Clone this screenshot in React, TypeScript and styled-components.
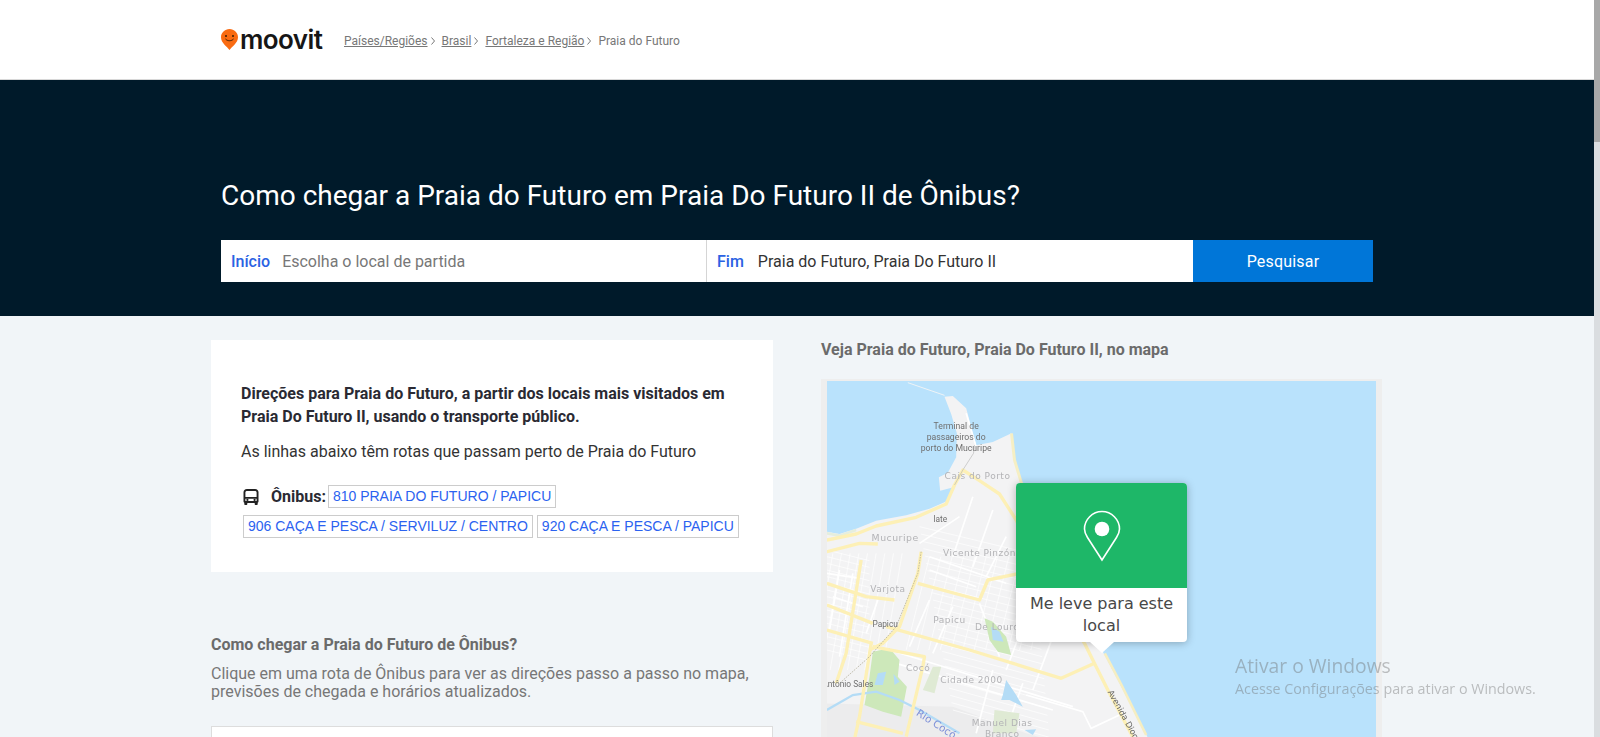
import React from 'react';
import styled, { createGlobalStyle } from 'styled-components';

const GlobalStyle = createGlobalStyle`
    html, body {
        margin: 0;
        height: 737px;
        overflow: hidden;
        background: #f1f5f8;
        font-family: Roboto, "Liberation Sans", sans-serif;
    }
    * {
        box-sizing: border-box;
    }
`;

const Page = styled.div`
    width: 1594px;
    height: 737px;
    overflow: hidden;
`;

const Header = styled.header`
    height: 80px;
    background: #fff;
    border-bottom: 1px solid #d8d8d8;
    padding-left: 221px;
    display: flex;
    align-items: center;
`;

const Logo = styled.a`
    display: flex;
    align-items: center;
    width: 123px;
`;

const LogoText = styled.span`
    font-family: Inter, sans-serif;
    font-size: 26px;
    font-weight: 600;
    letter-spacing: -0.6px;
    color: #161616;
    margin-left: 2px;
    line-height: 28px;
`;

const Crumbs = styled.nav`
    display: flex;
    align-items: center;
    font-size: 12px;
    color: #777;
    margin-top: 2px;
`;

const CrumbLink = styled.a`
    color: #777;
    text-decoration: underline;
`;

const Chevron = styled.svg`
    width: 4px;
    height: 8px;
    margin: 1px 7px 0 3px;
`;

const Hero = styled.section`
    height: 236px;
    background: #001a2a;
    padding: 100px 221px 0 221px;
`;

const Title = styled.h1`
    margin: 0;
    height: 60px;
    font-size: 28px;
    line-height: 32px;
    font-weight: 400;
    color: #fff;
`;

const SearchBar = styled.form`
    display: flex;
    height: 42px;
    background: #fff;
`;

const Field = styled.div<{ $width: number; $divided?: boolean }>`
    width: ${props => props.$width}px;
    display: flex;
    align-items: center;
    font-size: 16px;
    padding-left: 10px;
    border-left: ${props => (props.$divided ? '1px solid #d5d5d5' : 'none')};
`;

const FieldLabel = styled.span<{ $gap: number }>`
    color: #2b62e3;
    font-weight: 500;
    margin-right: ${props => props.$gap}px;
`;

const FieldValue = styled.span<{ $placeholder?: boolean }>`
    color: ${props => (props.$placeholder ? '#777' : '#333')};
`;

const SearchButton = styled.button`
    width: 180px;
    border: 0;
    background: #0076d8;
    color: #fff;
    font: 400 16px Roboto, sans-serif;
    letter-spacing: 0.2px;
`;

const Content = styled.main`
    display: flex;
    padding: 24px 0 0 211px;
`;

const LeftColumn = styled.div`
    width: 561.5px;
    margin-right: 48.5px;
`;

const Card = styled.div`
    height: 232px;
    background: #fff;
    padding: 42px 30px 0;
`;

const CardHeading = styled.p`
    margin: 0;
    font-size: 16px;
    line-height: 23px;
    font-weight: 700;
    color: #2a2a33;
`;

const CardText = styled.p`
    margin: 12px 0 0;
    font-size: 16px;
    line-height: 24px;
    color: #333;
`;

const Lines = styled.div`
    margin-top: 21px;
    display: flex;
    flex-wrap: wrap;
    align-items: center;
    gap: 7px 4px;
    padding-left: 2px;
`;

const Transit = styled.span`
    display: flex;
    align-items: center;
    font-size: 16px;
    font-weight: 700;
    color: #2a2a33;
    margin-right: -2px;
`;

const BusIcon = styled.svg`
    width: 16px;
    height: 16px;
    margin-right: 12px;
`;

const LineChip = styled.a`
    display: block;
    height: 23px;
    padding: 0 4px;
    border: 1px solid #ccc;
    font-family: "Liberation Sans", Arial, sans-serif;
    font-size: 14px;
    line-height: 21px;
    color: #2b62f0;
`;

const SectionTitle = styled.h2`
    margin: 61px 0 0;
    font-size: 16px;
    line-height: 24px;
    font-weight: 700;
    color: #6b6b6b;
`;

const SectionText = styled.p`
    margin: 8px 0 0;
    font-size: 16px;
    line-height: 18px;
    color: #777;
`;

const RoutesBox = styled.div`
    margin-top: 25px;
    height: 60px;
    background: #fff;
    border: 1px solid #ddd;
`;

const RightColumn = styled.div`
    width: 561px;
`;

const MapTitle = styled.h2`
    margin: 0;
    font-size: 16px;
    line-height: 20px;
    font-weight: 700;
    color: #6b6b6b;
`;

const MapFrame = styled.div`
    position: relative;
    margin-top: 19px;
    height: 500px;
    background: #b9e2fc;
    border: 6px solid #eeeeee;
    border-top-width: 2px;
    overflow: hidden;
`;

const MapSvg = styled.svg`
    display: block;
    width: 549px;
    height: 498px;
    filter: blur(0.6px);
`;

const Popup = styled.div`
    position: absolute;
    left: 189px;
    top: 102px;
    width: 171px;
    height: 159px;
    border-radius: 4px;
    background: #fff;
    box-shadow: 0 1px 8px rgba(0, 0, 0, 0.28);

    &::after {
        content: '';
        position: absolute;
        left: 74px;
        bottom: -11px;
        border-left: 12px solid transparent;
        border-right: 12px solid transparent;
        border-top: 11px solid #fff;
    }
`;

const PopupTop = styled.div`
    height: 105px;
    background: #1eb768;
    border-radius: 4px 4px 0 0;
    display: flex;
    align-items: center;
    justify-content: center;
`;

const PopupText = styled.div`
    padding: 5px 6px 0;
    text-align: center;
    font-family: "DejaVu Sans", sans-serif;
    font-size: 16px;
    line-height: 22px;
    color: #484848;
`;

const ScrollBar = styled.div`
    position: fixed;
    top: 0;
    right: 0;
    width: 6px;
    height: 737px;
    background: #dadde0;

    &::before {
        content: '';
        display: block;
        height: 142px;
        background: #a8a8a8;
    }
`;

const Watermark = styled.div`
    position: fixed;
    left: 1235px;
    top: 653px;
    color: rgba(110, 110, 110, 0.42);
    font-family: "Open Sans", sans-serif;
    pointer-events: none;
`;

const WatermarkTitle = styled.div`
    font-size: 19.3px;
    line-height: 26px;
`;

const WatermarkText = styled.div`
    font-size: 14.3px;
    line-height: 20px;
`;

const LAND =
    'M22 485 L60 492 L110 476 L170 452 L260 436 L330 416 L385 392 L402 352 L362 362 L358 322 L385 308 L410 262 L412 190 L395 132 L375 80 L400 78 L440 115 L470 226 L520 216 L576 190 L585 270 L606 340 L640 440 L700 590 L780 740 L850 845 L900 940 L984 1101 L984 1600 L0 1600 L0 485 Z';

const YELLOW_ROADS = [
    'M22 510 L110 492 L170 468 L290 442 L380 402 L405 345 L430 300 L480 332 L540 372 L590 450 L640 560',
    'M22 545 L120 520 L175 522',
    'M305 545 L295 610 L240 770 L190 820 L150 840',
    'M295 640 L480 690 L505 630 L600 610',
    'M200 770 L450 840 L725 925 L825 880',
    'M155 820 L120 1040 L100 1130',
    'M160 830 L315 860 L310 890 L260 1100',
    'M22 640 L140 680 L225 690',
    'M22 705 L160 760',
    'M22 780 L160 820',
    'M125 570 L80 850 L50 940',
    'M110 1055 L250 1090',
    'M795 820 L830 890 L870 970 L940 1101',
    'M640 560 L795 820',
];

const WHITE_ROADS = [
    'M620 975 L790 1025 L815 1075 L900 1035',
    'M210 840 L760 1010',
    'M230 880 L700 1020',
    'M480 700 L540 860',
    'M20 610 L120 625',
    'M40 680 L130 710',
    'M60 600 L30 780',
    'M100 610 L60 860',
    'M175 690 L140 790',
    'M330 690 L270 830',
    'M400 710 L340 850',
    'M620 740 L560 900',
    'M700 800 L640 960',
    'M520 900 L470 1090',
    'M610 940 L560 1080',
    'M420 440 L300 520',
    'M460 380 L400 560',
    'M520 420 L460 590',
    'M560 500 L500 620',
    'M330 560 L560 640',
    'M330 600 L470 650',
    'M440 130 L470 230',
];

// thin side streets of the blocks, generated so the grey areas have some texture
const STREETS = [
    ...Array.from({ length: 26 }, (_, i) => {
        const y = 470 + i * 22;
        return `M${300 + i * 4} ${y} L${640 + i * 2} ${y + 82}`;
    }),
    ...Array.from({ length: 16 }, (_, i) => {
        const y = 540 + i * 20;
        return `M22 ${y} L150 ${y + 32}`;
    }),
    ...Array.from({ length: 9 }, (_, i) => {
        const x = 40 + i * 26;
        return `M${x} 550 L${x - 60} 900`;
    }),
    ...Array.from({ length: 12 }, (_, i) => {
        const x = 330 + i * 34;
        return `M${x} 560 L${x - 70} 840`;
    }),
];

const LABELS: { x: number; y: number; text: string; size?: number; dark?: boolean }[] = [
    { x: 410, y: 178, text: 'Terminal de', size: 26, dark: true },
    { x: 410, y: 210, text: 'passageiros do', size: 26, dark: true },
    { x: 410, y: 242, text: 'porto do Mucuripe', size: 26, dark: true },
    { x: 474, y: 328, text: 'Cais do Porto', size: 27 },
    { x: 362, y: 456, text: 'Iate', size: 25, dark: true },
    { x: 227, y: 512, text: 'Mucuripe', size: 28 },
    { x: 480, y: 558, text: 'Vicente Pinzón', size: 27 },
    { x: 205, y: 666, text: 'Varjota', size: 27 },
    { x: 197, y: 771, text: 'Papicu', size: 25, dark: true },
    { x: 390, y: 758, text: 'Papicu', size: 27 },
    { x: 550, y: 779, text: 'De Lourdes', size: 27 },
    { x: 296, y: 904, text: 'Cocó', size: 27 },
    { x: 456, y: 938, text: 'Cidade 2000', size: 27 },
    { x: 85, y: 952, text: 'Antônio Sales', size: 25, dark: true },
    { x: 548, y: 1069, text: 'Manuel Dias', size: 27 },
    { x: 548, y: 1101, text: 'Branco', size: 27 },
];

const MapDrawing = () => (
    <MapSvg viewBox="22.5 33 1647 1494">
        <path d="M265 38 L375 76" stroke="#eef3f6" strokeWidth="3" fill="none" />
        <path d={LAND} fill="#f3f3f4" />
        <path d="M0 1000 L400 1010 L620 1090 L1000 1200 L0 1600 Z" fill="#ececed" />
        <path d="M576 190 L585 270 L606 340 L640 440" stroke="#f6efc4" strokeWidth="9" fill="none" />
        <path d="M22 490 L60 497 L110 480" stroke="#e6eedd" strokeWidth="8" fill="none" />
        <path d="M856 850 L906 945 L980 1095" stroke="#f6eec2" strokeWidth="8" fill="none" />
        <g stroke="#fff" fill="none">
            {WHITE_ROADS.map(d => (
                <path key={d} d={d} strokeWidth="5" />
            ))}
            {STREETS.map(d => (
                <path key={d} d={d} strokeWidth="2" />
            ))}
        </g>
        <path
            d="M160 845 L210 835 L240 870 L235 920 L262 950 L245 1040 L190 1025 L135 1005 L150 920 Z"
            fill="#cde8ba"
        />
        <path d="M340 890 L365 890 L345 970 L310 960 Z" fill="#dfead4" />
        <path d="M495 745 L520 755 L560 800 L575 855 L535 845 L510 810 Z" fill="#cde8ba" />
        <path d="M525 1020 L600 1030 L590 1090 L520 1090 Z" fill="#dfead4" />
        <g fill="#b4dcf6">
            <path d="M515 770 L540 785 L552 815 L520 810 Z" />
            <path d="M175 910 L200 905 L190 945 L165 945 Z" />
            <path d="M222 912 L240 935 L225 945 Z" />
            <path d="M560 930 L590 975 L610 1010 L570 990 L545 990 L550 975 Z" />
            <path d="M615 1080 L650 1078 L640 1095 Z" />
        </g>
        <path d="M22 1020 L100 975 L170 965 L240 990 L300 1020 L420 1090" stroke="#b4dcf6" strokeWidth="7" fill="none" />
        <g stroke="#fdf0b6" fill="none" strokeLinejoin="round">
            {YELLOW_ROADS.map(d => (
                <path key={d} d={d} strokeWidth="10" />
            ))}
        </g>
        <path d="M305 545 L295 610 L230 770 L150 860 L60 940" stroke="#a9a58e" strokeWidth="2" strokeDasharray="5 3" fill="none" />
        <path d="M405 345 L430 300 L462 250 L465 225" stroke="#b9b9b9" strokeWidth="2" fill="none" />
        <g textAnchor="middle">
            {LABELS.map(l => (
                <text
                    key={l.text + l.y}
                    x={l.x}
                    y={l.y}
                    fontFamily={l.dark ? 'Roboto, sans-serif' : '"DejaVu Sans", sans-serif'}
                    fontSize={l.size}
                    fill={l.dark ? '#6f6f6f' : '#b3b3b6'}
                    letterSpacing={l.dark ? 0 : 1.5}
                >
                    {l.text}
                </text>
            ))}
        </g>
        <text x="288" y="1034" transform="rotate(33 288 1034)" fontFamily='"DejaVu Sans", sans-serif' fontSize="31" fill="#7d8fd8">
            Rio Cocó
        </text>
        <text x="864" y="966" transform="rotate(61 864 966)" fontFamily='"DejaVu Sans", sans-serif' fontSize="25" fill="#666">
            Avenida Dioguinho
        </text>
    </MapSvg>
);

const PinIcon = () => (
    <svg width="38" height="52" viewBox="0 0 38 52">
        <path
            d="M19 50 L4.5 27.5 C2.8 24.8 1.5 22.3 1.5 19 C1.5 9.6 9.4 1.5 19 1.5 C28.6 1.5 36.5 9.6 36.5 19 C36.5 22.3 35.2 24.8 33.5 27.5 Z"
            fill="none"
            stroke="#fff"
            strokeWidth="1.6"
        />
        <circle cx="19" cy="19" r="7.3" fill="#fff" />
    </svg>
);

const MoovitPin = () => (
    <svg width="17" height="21" viewBox="0 0 17 21">
        <path d="M8.5 21 C6 17.5 0 14 0 8.3 C0 3.7 3.8 0 8.5 0 C13.2 0 17 3.7 17 8.3 C17 14 11 17.5 8.5 21 Z" fill="#f96b12" />
        <circle cx="5" cy="7" r="1" fill="#3a1c05" />
        <circle cx="12" cy="7" r="1" fill="#3a1c05" />
        <path d="M4.5 10 C6.5 12.3 10.5 12.3 12.5 10" stroke="#3a1c05" strokeWidth="1" fill="none" />
    </svg>
);

const CrumbChevron = () => (
    <Chevron viewBox="0 0 4 8">
        <path d="M0.5 0.5 L3.5 4 L0.5 7.5" fill="none" stroke="#777" strokeWidth="1" />
    </Chevron>
);

const App = () => (
    <Page>
        <GlobalStyle />
        <Header>
            <Logo>
                <MoovitPin />
                <LogoText>moovit</LogoText>
            </Logo>
            <Crumbs>
                <CrumbLink>Países/Regiões</CrumbLink>
                <CrumbChevron />
                <CrumbLink>Brasil</CrumbLink>
                <CrumbChevron />
                <CrumbLink>Fortaleza e Região</CrumbLink>
                <CrumbChevron />
                <span>Praia do Futuro</span>
            </Crumbs>
        </Header>
        <Hero>
            <Title>Como chegar a Praia do Futuro em Praia Do Futuro II de Ônibus?</Title>
            <SearchBar>
                <Field $width={485}>
                    <FieldLabel $gap={12}>Início</FieldLabel>
                    <FieldValue $placeholder>Escolha o local de partida</FieldValue>
                </Field>
                <Field $width={487} $divided>
                    <FieldLabel $gap={14}>Fim</FieldLabel>
                    <FieldValue>Praia do Futuro, Praia Do Futuro II</FieldValue>
                </Field>
                <SearchButton type="button">Pesquisar</SearchButton>
            </SearchBar>
        </Hero>
        <Content>
            <LeftColumn>
                <Card>
                    <CardHeading>
                        Direções para Praia do Futuro, a partir dos locais mais visitados em Praia Do Futuro II,
                        usando o transporte público.
                    </CardHeading>
                    <CardText>As linhas abaixo têm rotas que passam perto de Praia do Futuro</CardText>
                    <Lines>
                        <Transit>
                            <BusIcon viewBox="0 0 16 16">
                                <path
                                    fillRule="evenodd"
                                    d="M4 0 H12 C14.2 0 15.5 1.3 15.5 3.3 V12.5 C15.5 13.2 15.2 13.6 14.7 13.8 V15 C14.7 15.6 14.3 16 13.7 16 H12.7 C12.1 16 11.7 15.6 11.7 15 V14 H4.3 V15 C4.3 15.6 3.9 16 3.3 16 H2.3 C1.7 16 1.3 15.6 1.3 15 V13.8 C0.8 13.6 0.5 13.2 0.5 12.5 V3.3 C0.5 1.3 1.8 0 4 0 Z M4.2 2 C3 2 2.4 2.5 2.4 3.5 V8 H13.6 V3.5 C13.6 2.5 13 2 11.8 2 Z M2.4 9.8 V12 H13.6 V9.8 Z"
                                    fill="#222"
                                />
                                <circle cx="4.4" cy="10.9" r="1.1" fill="#222" />
                                <circle cx="11.6" cy="10.9" r="1.1" fill="#222" />
                            </BusIcon>
                            Ônibus:
                        </Transit>
                        <LineChip>810 PRAIA DO FUTURO / PAPICU</LineChip>
                        <LineChip>906 CAÇA E PESCA / SERVILUZ / CENTRO</LineChip>
                        <LineChip>920 CAÇA E PESCA / PAPICU</LineChip>
                    </Lines>
                </Card>
                <SectionTitle>Como chegar a Praia do Futuro de Ônibus?</SectionTitle>
                <SectionText>
                    Clique em uma rota de Ônibus para ver as direções passo a passo no mapa, previsões de chegada e
                    horários atualizados.
                </SectionText>
                <RoutesBox />
            </LeftColumn>
            <RightColumn>
                <MapTitle>Veja Praia do Futuro, Praia Do Futuro II, no mapa</MapTitle>
                <MapFrame>
                    <MapDrawing />
                    <Popup>
                        <PopupTop>
                            <PinIcon />
                        </PopupTop>
                        <PopupText>Me leve para este local</PopupText>
                    </Popup>
                </MapFrame>
            </RightColumn>
        </Content>
        <ScrollBar />
        <Watermark>
            <WatermarkTitle>Ativar o Windows</WatermarkTitle>
            <WatermarkText>Acesse Configurações para ativar o Windows.</WatermarkText>
        </Watermark>
    </Page>
);

export default App;
